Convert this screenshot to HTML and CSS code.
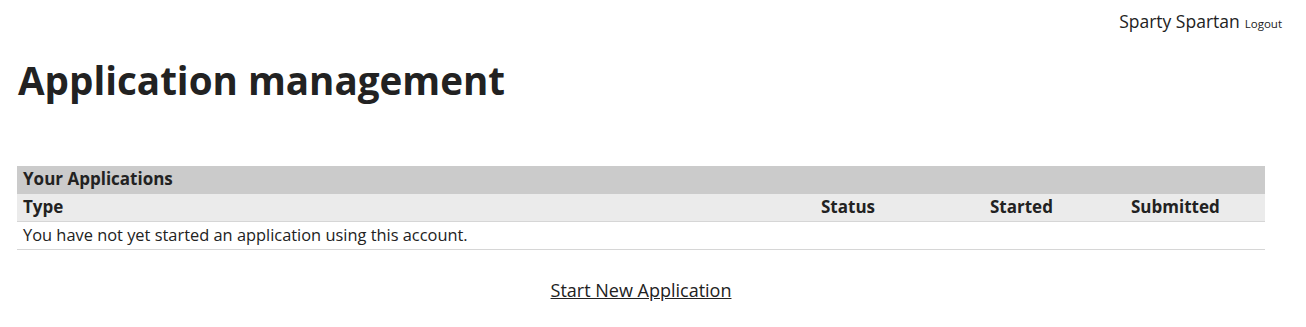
FILE: index.html
```html
<!DOCTYPE html>
<html lang="en">
  <head>
    <meta charset="UTF-8" />
    <meta name="viewport" content="width=device-width, initial-scale=1.0" />
    <title>Application management</title>
    <link rel="stylesheet" href="styles.css">
  </head>
  <body>
    <div class="userbar">
      <span class="username">Sparty Spartan</span>
      <a href="#" class="logout">Logout</a>
    </div>
    <h1>Application management</h1>

    <table class="apps">
      <tr class="caption">
        <th colspan="4">Your Applications</th>
      </tr>
      <tr class="heads">
        <th class="col-type">Type</th>
        <th class="col-status">Status</th>
        <th class="col-started">Started</th>
        <th class="col-submitted">Submitted</th>
      </tr>
      <tr class="empty">
        <td colspan="4">You have not yet started an application using this account.</td>
      </tr>
    </table>

    <div class="newapp">
      <a href="#">Start New Application</a>
    </div>
  </body>
</html>
```

FILE: styles.css
```css
body {
  margin: 0;
  padding: 0 41px 0 17px;
  font-family: "Open Sans", "Noto Sans", sans-serif;
  color: #222;
  background-color: white;
}
.userbar {
  display: flex;
  justify-content: flex-end;
  align-items: baseline;
  gap: 5px;
  padding: 9px 0 0 0;
  margin-right: -17px;
  height: 27px;
}
.username {
  font-size: 17.5px;
}
.logout {
  font-size: 11.5px;
  color: #222;
  text-decoration: none;
}
h1 {
  font-size: 38.6px;
  font-weight: 700;
  margin: 19px 0 0 1px;
  line-height: 50px;
  height: 111px;
}
.apps {
  width: 100%;
  border-collapse: collapse;
  font-size: 16.4px;
}
.apps th,
.apps td {
  text-align: left;
  line-height: 24px;
  padding: 1px 6px 3px;
}
.apps th {
  font-weight: 700;
  font-size: 17px;
}
.caption th {
  background-color: #cbcbcb;
}
.heads th {
  background-color: #ebebeb;
  border-bottom: 1px solid #d6d6d6;
  padding-bottom: 2px;
}
.empty td {
  border-bottom: 1px solid #d6d6d6;
  padding-bottom: 2px;
}
.col-type {
  width: 786px;
}
.col-status {
  width: 157px;
}
.col-started {
  width: 129px;
}
.newapp {
  text-align: center;
  margin-top: 28px;
  font-size: 18px;
}
.newapp a {
  color: #222;
}
```
